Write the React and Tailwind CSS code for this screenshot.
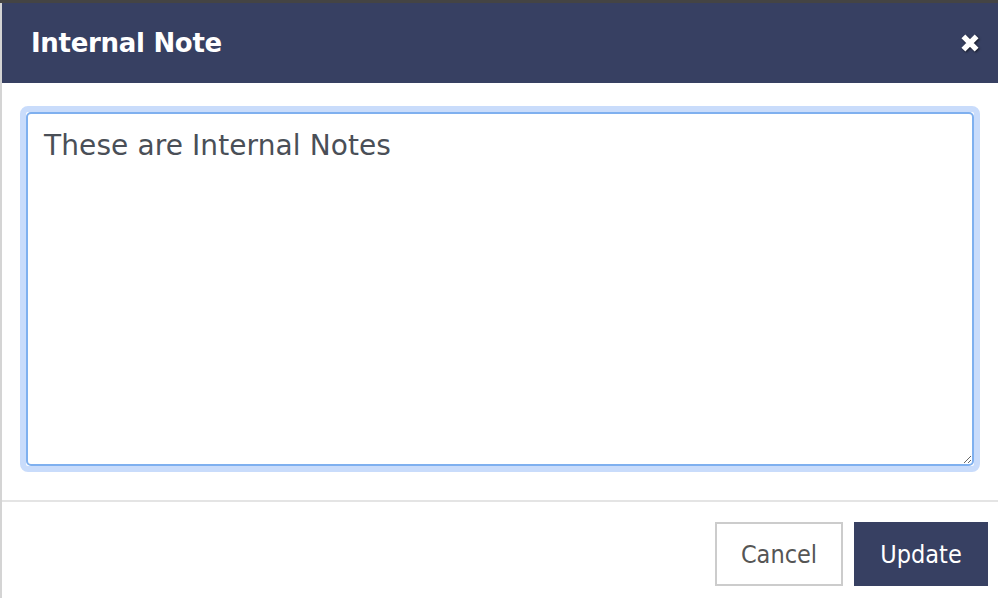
export default function App() {
  return (
    <div className="w-[998px] h-[598px] bg-white border-t-[3px] border-[#444444] overflow-hidden" style={{ fontFamily: '"DejaVu Sans", Verdana, sans-serif' }}>
      <div className="h-full border-l-2 border-[#d4d4d4] flex flex-col">
        {/* Header */}
        <div className="h-[80px] bg-[#374062] flex items-center justify-between pl-[29px] pr-[17px]">
          <h2 className="text-white font-bold text-[26px] tracking-[-0.3px]">Internal Note</h2>
          <button className="text-white [filter:drop-shadow(1px_1px_1px_rgba(0,0,0,0.6))]">
            <svg width="22" height="22" viewBox="0 0 20 20">
              <path d="M4 4 L16 16 M16 4 L4 16" stroke="white" strokeWidth="5" strokeLinecap="butt" />
            </svg>
          </button>
        </div>

        {/* Body */}
        <div className="px-[18px] pt-[23px] pb-[28px]">
          <div className="rounded-[8px] border-[6px] border-[#c9dcfb]">
            <textarea
              className="block w-full h-[354px] rounded-[5px] border-2 border-[#7fb0ef] outline-none px-[16px] py-[11px] text-[28px] tracking-[0.1px] text-[#4a4f57] resize-y"
              style={{ fontFamily: '"DejaVu Sans", Verdana, sans-serif' }}
              defaultValue="These are Internal Notes"
            />
          </div>
        </div>

        {/* Footer */}
        <div className="border-t-2 border-[#e4e4e4] flex justify-end gap-[11px] pt-[20px] pr-[10px]" style={{ fontFamily: '"DejaVu Sans Condensed", "DejaVu Sans", sans-serif' }}>
          <button className="w-[128px] h-[64px] border-2 border-[#cccccc] bg-white text-[#555555] text-[25px] pt-[2px]">Cancel</button>
          <button className="w-[134px] h-[64px] bg-[#374062] text-white text-[25px] pt-[2px]">Update</button>
        </div>
      </div>
    </div>
  )
}
